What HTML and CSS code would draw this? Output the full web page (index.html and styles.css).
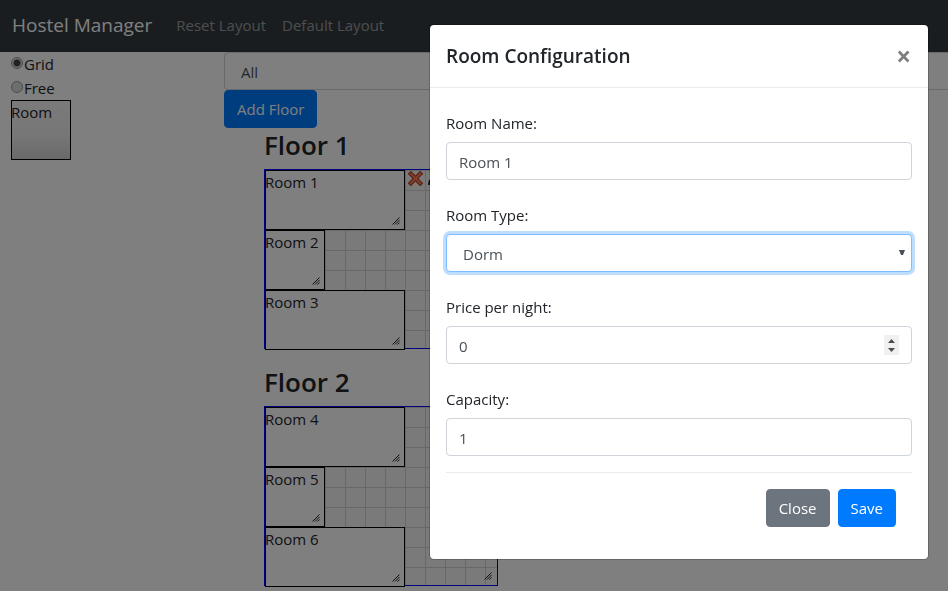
FILE: index.html
```html
<!DOCTYPE html>
<html lang="en">
<head>
<meta charset="utf-8">
<title>Hostel Manager</title>
<link rel="stylesheet" href="styles.css">
</head>
<body>
<svg class="defs" aria-hidden="true">
  <symbol id="grip" viewBox="0 0 8 8"><path d="M.5 7.5 7.5 .5M3 7.5 7.5 3M5.5 7.5 7.5 5.5" fill="none" stroke="#222" stroke-width="1"/></symbol>
</svg>
<nav class="navbar">
  <a class="brand" href="#">Hostel Manager</a>
  <a class="nav-link" href="#">Reset Layout</a>
  <a class="nav-link" href="#">Default Layout</a>
</nav>
<div class="layout">
  <aside class="sidebar">
    <label class="mode"><input type="radio" name="mode" checked>Grid</label>
    <label class="mode"><input type="radio" name="mode">Free</label>
    <div class="template">Room</div>
  </aside>
  <main class="main">
    <select class="control filter" aria-label="Floor filter"><option>All</option></select>
    <button class="btn btn-primary" type="button">Add Floor</button>
    <div class="floors">
      <section class="floor">
        <h2>Floor 1</h2>
        <div class="grid">
          <div class="room wide">Room 1<svg class="grip"><use href="#grip"/></svg>
            <div class="tools">
              <button class="tool" type="button" aria-label="Delete"><svg viewBox="0 0 16 16"><path d="M3 3 13 13M13 3 3 13" stroke="#a93016" stroke-width="4.6" stroke-linecap="square"/><path d="M3 3 13 13M13 3 3 13" stroke="#ff7956" stroke-width="2.6" stroke-linecap="square"/></svg></button>
              <button class="tool" type="button" aria-label="Edit"><svg viewBox="0 0 16 16"><path d="M1 15 2 10 11 1 15 5 6 14Z" fill="#111"/></svg></button>
            </div>
          </div>
          <div class="room">Room 2<svg class="grip"><use href="#grip"/></svg></div>
          <div class="room wide">Room 3<svg class="grip"><use href="#grip"/></svg></div>
          <svg class="grip"><use href="#grip"/></svg>
        </div>
      </section>
      <section class="floor">
        <h2>Floor 2</h2>
        <div class="grid">
          <div class="room wide">Room 4<svg class="grip"><use href="#grip"/></svg></div>
          <div class="room">Room 5<svg class="grip"><use href="#grip"/></svg></div>
          <div class="room wide">Room 6<svg class="grip"><use href="#grip"/></svg></div>
          <svg class="grip"><use href="#grip"/></svg>
        </div>
      </section>
    </div>
  </main>
</div>
<div class="backdrop">
  <div class="modal" role="dialog" aria-labelledby="modal-title">
    <header class="modal-header">
      <h5 id="modal-title">Room Configuration</h5>
      <button class="close" type="button" aria-label="Close">×</button>
    </header>
    <form class="modal-body">
      <div class="group">
        <label for="name">Room Name:</label>
        <input class="control" id="name" type="text" value="Room 1">
      </div>
      <div class="group">
        <label for="type">Room Type:</label>
        <div class="field">
          <select class="control active" id="type"><option>Dorm</option></select>
          <svg class="arrow" viewBox="0 0 6 6"><path d="M0 0H6L4 5H2Z" fill="#495057"/></svg>
        </div>
      </div>
      <div class="group">
        <label for="price">Price per night:</label>
        <div class="field">
          <input class="control" id="price" type="number" value="0">
          <svg class="spinner" viewBox="0 0 15 20"><path d="M0 0H15V20H0Z" fill="#f0f0f0"/><path d="M4 8 7.5 4 11 8ZM4 13 7.5 17 11 13Z" fill="#4d4d4d"/></svg>
        </div>
      </div>
      <div class="group">
        <label for="capacity">Capacity:</label>
        <input class="control" id="capacity" type="number" value="1">
      </div>
      <footer class="modal-footer">
        <button class="btn btn-secondary" type="button">Close</button>
        <button class="btn btn-primary" type="button">Save</button>
      </footer>
    </form>
  </div>
</div>
</body>
</html>
```
FILE: styles.css
```css
* { box-sizing: border-box; }
body {
  margin: 0;
  overflow: hidden;
  background: #fff;
  color: #212529;
  font: 15px/24px "Open Sans", sans-serif;
}
button, input, select { font: inherit; }
.defs { display: none; }

.navbar {
  display: flex;
  align-items: center;
  height: 52px;
  padding: 0 12px 2px;
  background: #343a40;
}
.brand { margin-right: 16px; color: #fff; font-size: 19px; text-decoration: none; }
.nav-link { padding: 0 8px; color: rgba(255, 255, 255, .5); text-decoration: none; }

.layout { display: flex; }
.sidebar { flex: 0 0 224px; padding-left: 11px; }
.mode { display: flex; align-items: center; }
.mode input {
  appearance: none;
  width: 12px;
  height: 12px;
  margin: 0 1px 2px 0;
  border: 1px solid #999;
  border-radius: 50%;
  background: #ddd;
}
.mode input:checked { background: radial-gradient(circle, #444 3px, #ddd 4px); }
.template {
  width: 60px;
  height: 60px;
  box-shadow: inset 0 0 0 1px #000;
  background: linear-gradient(#f5f5f5, #eee 60%, #d2d2d2);
}

.main { flex: 1; margin-right: -16px; }
.control {
  display: block;
  width: 100%;
  height: 38px;
  padding: 7px 12px 5px;
  appearance: none;
  border: 1px solid #ced4da;
  border-radius: 4px;
  outline: 0;
  background: #fff;
  color: #495057;
}
select.control { padding-left: 16px; }
.control::-webkit-inner-spin-button { appearance: none; }
.active { border-color: #80bdff; box-shadow: 0 0 0 3px rgba(0, 123, 255, .25); }
.btn {
  display: block;
  padding: 6px 12px;
  border: 1px solid;
  border-radius: 4px;
  color: #fff;
}
.btn-primary { border-color: #007bff; background: #007bff; }
.btn-secondary { border-color: #6c757d; background: #6c757d; }

.floors { padding-left: 40px; }
.floor { margin-bottom: 16px; }
h2 { margin: 0 0 8px; padding-top: 1px; font-size: 26px; line-height: 32px; font-weight: 600; }
.grid {
  position: relative;
  width: 234px;
  height: 180px;
  border: 1px solid #00f;
  background:
    linear-gradient(#d0d0d0 1px, transparent 1px) 0 0 / 20px 20px,
    linear-gradient(90deg, #d0d0d0 1px, #f5f5f5 1px) 0 0 / 20px 20px;
}
.room {
  position: relative;
  width: 60px;
  height: 60px;
  box-shadow: inset 0 0 0 1px #000;
  background: #fff;
  white-space: nowrap;
}
.wide { width: 140px; }
.grip { position: absolute; right: 5px; bottom: 5px; width: 8px; height: 8px; }
.tools { position: absolute; top: 1px; left: 100%; display: flex; gap: 4px; padding-left: 3px; }
.tool { width: 15px; height: 15px; padding: 0; border: 0; background: none; }
.tool svg { display: block; }

.backdrop {
  position: fixed;
  inset: 0;
  display: flex;
  justify-content: flex-end;
  align-items: flex-start;
  padding: 24px 19px;
  background: rgba(0, 0, 0, .5);
}
.modal {
  width: 100%;
  max-width: 500px;
  border: 1px solid rgba(0, 0, 0, .2);
  border-radius: 5px;
  background: #fff;
  background-clip: padding-box;
}
.modal-header {
  display: flex;
  justify-content: space-between;
  align-items: center;
  padding: 16px;
  border-bottom: 1px solid #e9ecef;
}
h5 { margin: 0; font-size: 19px; line-height: 30px; font-weight: 600; }
.close { padding: 0 1px; border: 0; background: none; color: #7f7f7f; font-size: 26px; line-height: 24px; font-weight: 700; }
.modal-body { padding: 23px 16px 16px; }
.group { margin-bottom: 23px; }
.group:nth-last-child(2) { margin-bottom: 16px; }
.group label { display: block; width: fit-content; margin-bottom: 7px; }
.field { position: relative; }
.arrow { position: absolute; right: 7px; top: 16px; width: 6px; height: 6px; }
.spinner { position: absolute; right: 13px; top: 9px; width: 15px; height: 20px; }
.modal-footer {
  display: flex;
  justify-content: flex-end;
  gap: 8px;
  padding: 16px;
  border-top: 1px solid #e9ecef;
}
```
